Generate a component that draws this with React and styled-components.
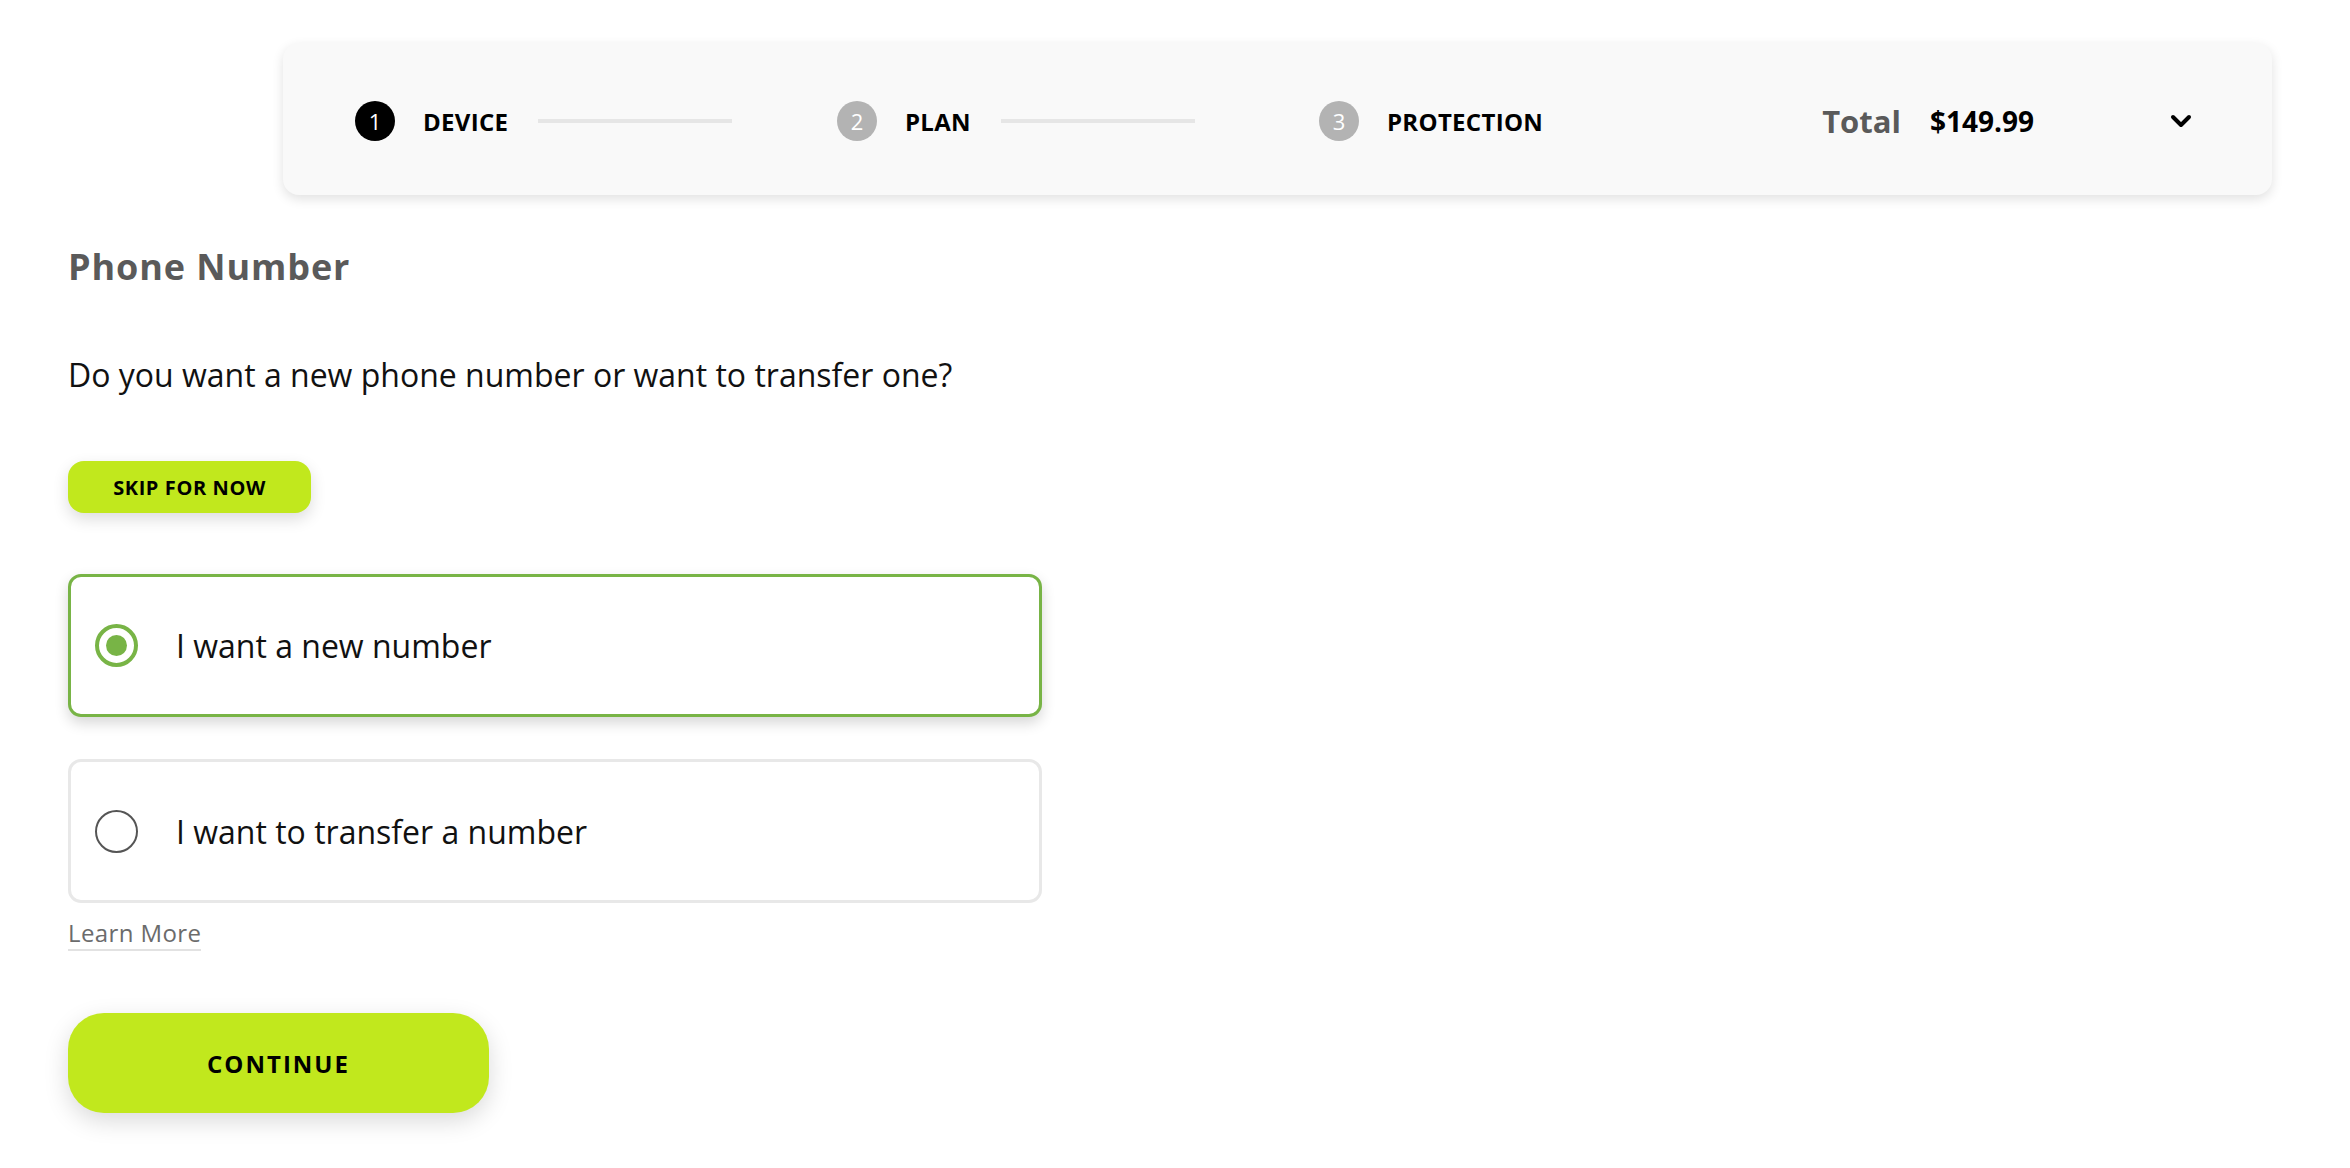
import React, { useState } from 'react';
import styled, { createGlobalStyle } from 'styled-components';

const GlobalStyle = createGlobalStyle`
  body {
    margin: 0;
    background: #fff;
    font-family: "Open Sans", "Noto Sans", sans-serif;
    color: #111;
  }
`;

const steps = [
  { num: 1, label: 'DEVICE', active: true },
  { num: 2, label: 'PLAN' },
  { num: 3, label: 'PROTECTION', last: true },
];

const options = [
  { id: 'new', label: 'I want a new number' },
  { id: 'transfer', label: 'I want to transfer a number' },
];

const App = () => {
  const [choice, setChoice] = useState('new');

  return (
    <Page>
      <GlobalStyle />
      <HeaderWrap>
        <Summary>
          {steps.map((s) => (
            <Step key={s.num} last={s.last}>
              <StepNum active={s.active}>{s.num}</StepNum>
              <StepLabel>{s.label}</StepLabel>
              {!s.last && <StepLine />}
            </Step>
          ))}
          <TotalGroup>
            <TotalLabel>Total</TotalLabel>
            <TotalPrice>$149.99</TotalPrice>
            <Toggle aria-label="Show order details">
              <svg width="22" height="14" viewBox="0 0 22 14" fill="none">
                <path d="M3 3 L11 11 L19 3" stroke="#000" strokeWidth="4" strokeLinecap="round" strokeLinejoin="round" />
              </svg>
            </Toggle>
          </TotalGroup>
        </Summary>
      </HeaderWrap>

      <Main>
        <Heading>Phone Number</Heading>
        <Question>Do you want a new phone number or want to transfer one?</Question>
        <SkipButton>SKIP FOR NOW</SkipButton>

        <OptionList>
          {options.map((o) => (
            <OptionCard key={o.id} selected={choice === o.id} onClick={() => setChoice(o.id)}>
              <Radio selected={choice === o.id} />
              <OptionText>{o.label}</OptionText>
            </OptionCard>
          ))}
        </OptionList>
        <LearnMore href="#">Learn More</LearnMore>

        <div>
          <ContinueButton>CONTINUE</ContinueButton>
        </div>
      </Main>
    </Page>
  );
};

export default App;

const Page = styled.div`
  padding-top: 43px;
  padding-bottom: 60px;
`;

const HeaderWrap = styled.div`
  padding: 0 78px 0 283px;
`;

const Summary = styled.div`
  box-sizing: border-box;
  height: 152px;
  display: flex;
  align-items: center;
  padding: 4px 80px 0 72px;
  background: #f9f9f9;
  border-radius: 16px;
  box-shadow: 0 4px 12px rgba(0, 0, 0, 0.12);
`;

const Step = styled.div`
  display: flex;
  align-items: center;
  width: ${(props) => (props.last ? 'auto' : '482px')};
  flex-shrink: 0;
`;

const StepNum = styled.div`
  width: 40px;
  height: 40px;
  border-radius: 50%;
  background: ${(props) => (props.active ? '#000' : '#b3b3b3')};
  color: #fff;
  font-size: 22px;
  line-height: 40px;
  text-align: center;
  flex-shrink: 0;
`;

const StepLabel = styled.span`
  margin-left: 28px;
  font-size: 24px;
  font-weight: 700;
  color: #000;
  letter-spacing: 0.3px;
`;

const StepLine = styled.div`
  width: 194px;
  height: 4px;
  margin-left: 30px;
  background: #e6e6e6;
`;

const TotalGroup = styled.div`
  margin-left: auto;
  display: flex;
  align-items: center;
`;

const TotalLabel = styled.span`
  font-size: 31px;
  font-weight: 700;
  color: #5a5a5a;
`;

const TotalPrice = styled.span`
  margin-left: 29px;
  font-size: 28px;
  font-weight: 700;
  color: #000;
`;

const Toggle = styled.button`
  margin-left: 136px;
  padding: 0;
  border: none;
  background: none;
  display: flex;
  cursor: pointer;
`;

const Main = styled.div`
  padding-left: 68px;
`;

const Heading = styled.h2`
  margin: 47px 0 0;
  font-size: 36px;
  line-height: 49px;
  font-weight: 700;
  color: #5a5a5a;
  letter-spacing: 0.9px;
`;

const Question = styled.p`
  margin: 62px 0 0;
  font-size: 32px;
  line-height: 44px;
  color: #111;
`;

const SkipButton = styled.button`
  margin-top: 64px;
  width: 243px;
  height: 52px;
  border: none;
  border-radius: 16px;
  background: #c1e81d;
  font-family: inherit;
  font-size: 20px;
  font-weight: 700;
  letter-spacing: 0.6px;
  color: #000;
  box-shadow: 0 6px 16px rgba(0, 0, 0, 0.14);
  cursor: pointer;
`;

const OptionList = styled.div`
  margin-top: 61px;
  display: flex;
  flex-direction: column;
  gap: 42px;
  width: 974px;
`;

const OptionCard = styled.div`
  box-sizing: border-box;
  height: ${(props) => (props.selected ? '143px' : '144px')};
  display: flex;
  align-items: center;
  padding-left: 24px;
  border: 3px solid ${(props) => (props.selected ? '#78b446' : '#e8e8e8')};
  border-radius: 13px;
  background: #fff;
  box-shadow: ${(props) => (props.selected ? '0 6px 14px rgba(0, 0, 0, 0.16)' : 'none')};
  cursor: pointer;
`;

const Radio = styled.span`
  box-sizing: border-box;
  position: relative;
  width: 43px;
  height: 43px;
  border-radius: 50%;
  flex-shrink: 0;
  border: ${(props) => (props.selected ? '4px solid #78b446' : '2px solid #555')};

  &::after {
    content: '';
    display: ${(props) => (props.selected ? 'block' : 'none')};
    position: absolute;
    left: 50%;
    top: 50%;
    width: 21px;
    height: 21px;
    margin: -10.5px 0 0 -10.5px;
    border-radius: 50%;
    background: #78b446;
  }
`;

const OptionText = styled.span`
  margin-left: 38px;
  font-size: 32px;
  color: #111;
`;

const LearnMore = styled.a`
  display: inline-block;
  margin-top: 13px;
  font-size: 24px;
  line-height: 33px;
  color: #6b6b6b;
  text-decoration: none;
  letter-spacing: 0.4px;
  border-bottom: 2px solid #e2e2e2;
`;

const ContinueButton = styled.button`
  margin-top: 62px;
  width: 421px;
  height: 100px;
  border: none;
  border-radius: 36px;
  background: #c1e81d;
  font-family: inherit;
  font-size: 24px;
  font-weight: 700;
  letter-spacing: 2px;
  color: #000;
  box-shadow: 0 8px 24px rgba(0, 0, 0, 0.15);
  cursor: pointer;
`;
